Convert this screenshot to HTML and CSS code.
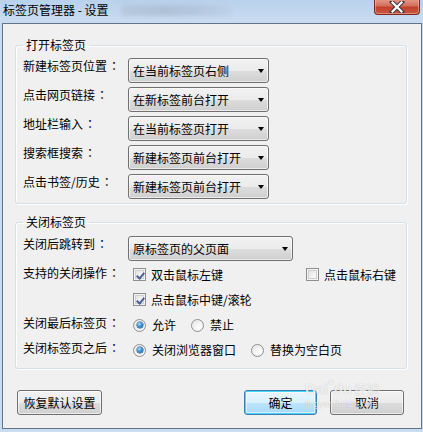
FILE: index.html
```html
<!DOCTYPE html>
<html lang="zh-CN">
<head>
<meta charset="utf-8">
<title>标签页管理器 - 设置</title>
<link rel="stylesheet" href="styles.css">
</head>
<body>
<div class="window">
  <div class="titlebar">
    <span class="title">标签页管理器 - 设置</span>
    <span class="blurred"></span>
    <div class="close">
      <svg width="16" height="12" viewBox="0 0 16 12">
        <path d="M3 1 L13 11 M13 1 L3 11" stroke="#3a3a44" stroke-width="4.2" stroke-linecap="square"/>
        <path d="M3.5 1.5 L12.5 10.5 M12.5 1.5 L3.5 10.5" stroke="#ffffff" stroke-width="2.2" stroke-linecap="square"/>
      </svg>
    </div>
  </div>
  <div class="client">
    <fieldset class="group group-open">
      <legend>打开标签页</legend>
      <div class="row">
        <span class="label">新建标签页位置<span class="colon">：</span></span>
        <div class="combo"><span>在当前标签页右侧</span><i class="arrow"></i></div>
      </div>
      <div class="row">
        <span class="label">点击网页链接<span class="colon">：</span></span>
        <div class="combo"><span>在新标签前台打开</span><i class="arrow"></i></div>
      </div>
      <div class="row">
        <span class="label">地址栏输入<span class="colon">：</span></span>
        <div class="combo"><span>在当前标签页打开</span><i class="arrow"></i></div>
      </div>
      <div class="row">
        <span class="label">搜索框搜索<span class="colon">：</span></span>
        <div class="combo"><span>新建标签页前台打开</span><i class="arrow"></i></div>
      </div>
      <div class="row">
        <span class="label">点击书签/历史<span class="colon">：</span></span>
        <div class="combo"><span>新建标签页前台打开</span><i class="arrow"></i></div>
      </div>
    </fieldset>

    <fieldset class="group group-close">
      <legend>关闭标签页</legend>
      <div class="row">
        <span class="label">关闭后跳转到<span class="colon">：</span></span>
        <div class="combo combo-wide"><span>原标签页的父页面</span><i class="arrow"></i></div>
      </div>
      <div class="row row-opt">
        <span class="label">支持的关闭操作<span class="colon">：</span></span>
        <div class="opts">
          <label class="opt opt-wide"><i class="check on"></i>双击鼠标左键</label>
          <label class="opt"><i class="check"></i>点击鼠标右键</label>
        </div>
      </div>
      <div class="row row-opt">
        <span class="label"></span>
        <div class="opts">
          <label class="opt"><i class="check on"></i>点击鼠标中键/滚轮</label>
        </div>
      </div>
      <div class="row row-opt">
        <span class="label">关闭最后标签页<span class="colon">：</span></span>
        <div class="opts opts-radio">
          <label class="opt"><i class="radio on"></i>允许</label>
          <label class="opt"><i class="radio"></i>禁止</label>
        </div>
      </div>
      <div class="row row-opt">
        <span class="label">关闭标签页之后<span class="colon">：</span></span>
        <div class="opts opts-radio">
          <label class="opt"><i class="radio on"></i>关闭浏览器窗口</label>
          <label class="opt"><i class="radio"></i>替换为空白页</label>
        </div>
      </div>
    </fieldset>

    <div class="buttons">
      <button class="btn btn-reset">恢复默认设置</button>
      <div class="spacer"></div>
      <button class="btn btn-default">确定</button>
      <button class="btn">取消</button>
    </div>

    <div class="watermark">
      <span class="wm-logo">Bai<span class="wm-paw">●</span>du</span><span class="wm-cn">经验</span>
      <span class="wm-url">jingyan.baidu.com</span>
    </div>
  </div>
</div>
</body>
</html>
```
FILE: styles.css
```css
* { box-sizing: border-box; }

html, body {
  margin: 0;
  padding: 0;
  width: 423px;
  height: 432px;
  overflow: hidden;
  background: #c9dcf0;
  font-family: "Noto Sans CJK SC", "Noto Sans", sans-serif;
  font-size: 12px;
  color: #000;
}

.window {
  width: 423px;
  height: 432px;
  display: flex;
  flex-direction: column;
  background: linear-gradient(180deg, #b9d1ec 0px, #c8dbf1 20px, #cadcf0 432px);
}

.titlebar {
  height: 23px;
  display: flex;
  align-items: flex-start;
  padding-left: 3px;
  position: relative;
}

.title {
  line-height: 20px;
  font-size: 12px;
  color: #000;
  white-space: nowrap;
}

.blurred {
  width: 110px;
  height: 11px;
  margin: 5px 0 0 12px;
  background: linear-gradient(90deg, #b3c4d8, #a7b9cf 40%, #aec1d7 70%, #bccfe5);
  filter: blur(2.5px);
  opacity: 0.75;
}

.close {
  position: absolute;
  left: 374px;
  top: -1px;
  width: 46px;
  height: 16px;
  border: 1px solid #7d2b22;
  border-top: none;
  border-radius: 0 0 4px 4px;
  background: linear-gradient(180deg, #e49b8b 0%, #d4705c 45%, #c2412c 55%, #c95840 100%);
  box-shadow: inset 0 0 0 1px rgba(255, 200, 190, 0.45);
  display: flex;
  justify-content: center;
  align-items: center;
}

.client {
  position: relative;
  margin: 0 1px 3px 2px;
  flex: 1;
  border: 1px solid #627489;
  background: #f0f0f0;
  padding: 13px 0 0 12px;
}

.group {
  margin: 0;
  width: 392px;
  border: 1px solid #d5dfe5;
  border-radius: 3px;
  box-shadow: inset 1px 1px 0 #fff, 1px 1px 0 #fff;
  padding: 5px 7px 4px 7px;
  min-width: 0;
}

.group legend {
  line-height: 16px;
  padding: 0 3px;
  margin-left: 0px;
}

.group-open .row + .row { margin-top: 4px; }

.group-close {
  margin-top: 10px;
  padding-top: 6px;
  padding-bottom: 7px;
}

.row {
  display: flex;
  align-items: flex-start;
  min-height: 25px;
}

.label {
  width: 105px;
  flex: none;
  line-height: 16px;
  white-space: nowrap;
}

.colon {
  font-family: "Noto Sans CJK TC", "Noto Sans CJK SC", sans-serif;
  display: inline-block;
  width: 12px;
  text-align: center;
  margin-left: 1px;
}

.row-opt {
  align-items: center;
}

.row-opt .label {
  margin-top: -1px;
}

.combo {
  width: 141px;
  height: 25px;
  border: 1px solid #707070;
  border-radius: 3px;
  background: linear-gradient(180deg, #f2f2f2 0%, #ebebeb 50%, #dddddd 51%, #cfcfcf 100%);
  box-shadow: inset 0 0 0 1px rgba(255, 255, 255, 0.6);
  display: flex;
  align-items: center;
  padding: 1px 4px 0 4px;
  line-height: 16px;
  white-space: nowrap;
}

.combo span { flex: 1; }

.combo-wide { width: 165px; }

.arrow {
  width: 0;
  height: 0;
  border-left: 3.5px solid transparent;
  border-right: 3.5px solid transparent;
  border-top: 4px solid #000;
  margin-right: 0px;
  margin-top: -1px;
}

.opts {
  display: flex;
  align-items: center;
  padding-left: 5px;
  padding-top: 2px;
}

.opt {
  display: flex;
  align-items: center;
  line-height: 16px;
  white-space: nowrap;
}

.opt-wide { width: 173px; }

.opts-radio { padding-top: 3px; }
.opts-radio .opt + .opt { margin-left: 15px; }

.check {
  width: 13px;
  height: 13px;
  margin-right: 5px;
  border: 1px solid #8e8f8f;
  background: linear-gradient(135deg, #dcdcdc 0%, #f4f4f4 60%, #ffffff 100%);
  box-shadow: inset 0 0 0 1px #f4f4f4, inset 0 0 0 2px #cfcfcf;
  position: relative;
  flex: none;
}

.check.on::after {
  content: "";
  position: absolute;
  left: 3.5px;
  top: 1.5px;
  width: 3px;
  height: 6px;
  border-right: 2px solid #4a5f97;
  border-bottom: 2px solid #4a5f97;
  transform: rotate(40deg);
}

.radio {
  width: 13px;
  height: 13px;
  margin-right: 6px;
  border-radius: 50%;
  border: 1px solid #8f8f8f;
  background: radial-gradient(circle at 65% 65%, #ffffff 0%, #f2f2f2 45%, #d6d6d6 100%);
  box-shadow: inset 0 0 0 1px #f2f2f2;
  position: relative;
  flex: none;
}

.radio.on::after {
  content: "";
  position: absolute;
  left: 2.5px;
  top: 2.5px;
  width: 6px;
  height: 6px;
  border-radius: 50%;
  background: radial-gradient(circle at 40% 35%, #b7e3fb 0%, #3a8fd6 45%, #0c4d8f 100%);
  box-shadow: 0 0 0 0.5px #1f4d7a;
}

.buttons {
  display: flex;
  margin-top: 21px;
  width: 392px;
  padding: 0 3px 0 2px;
}

.spacer { flex: 1; }

.btn {
  font-family: inherit;
  font-size: 12px;
  color: #000;
  height: 25px;
  border: 1px solid #707070;
  border-radius: 3px;
  background: linear-gradient(180deg, #f2f2f2 0%, #ebebeb 50%, #dddddd 51%, #cfcfcf 100%);
  box-shadow: inset 0 0 0 1px rgba(255, 255, 255, 0.6);
  padding: 0;
  line-height: 16px;
  width: 74px;
  margin-left: 13px;
}

.btn-reset {
  width: 85px;
  margin-left: 0;
}

.btn-default {
  width: 73px;
  border-color: #3c7fb1;
  background: linear-gradient(180deg, #eaf6fd 0%, #d9f0fc 50%, #bee6fd 51%, #a7d9f5 100%);
  box-shadow: inset 0 0 0 1px #48d3f9, inset 0 0 0 2px rgba(255, 255, 255, 0.5);
}

.watermark {
  position: absolute;
  left: 302px;
  top: 354px;
  width: 100px;
  pointer-events: none;
  color: rgba(255, 255, 255, 0.8);
  text-shadow: 0 0 1px rgba(0, 0, 0, 0.25);
  font-family: "Liberation Sans", "Noto Sans CJK SC", sans-serif;
  line-height: 1;
}

.wm-logo {
  font-size: 15px;
  font-weight: bold;
}

.wm-paw {
  font-size: 9px;
  vertical-align: 9px;
}

.wm-cn {
  font-size: 13px;
  margin-left: 2px;
}

.wm-url {
  display: block;
  font-size: 9px;
  margin-top: 4px;
}
```
